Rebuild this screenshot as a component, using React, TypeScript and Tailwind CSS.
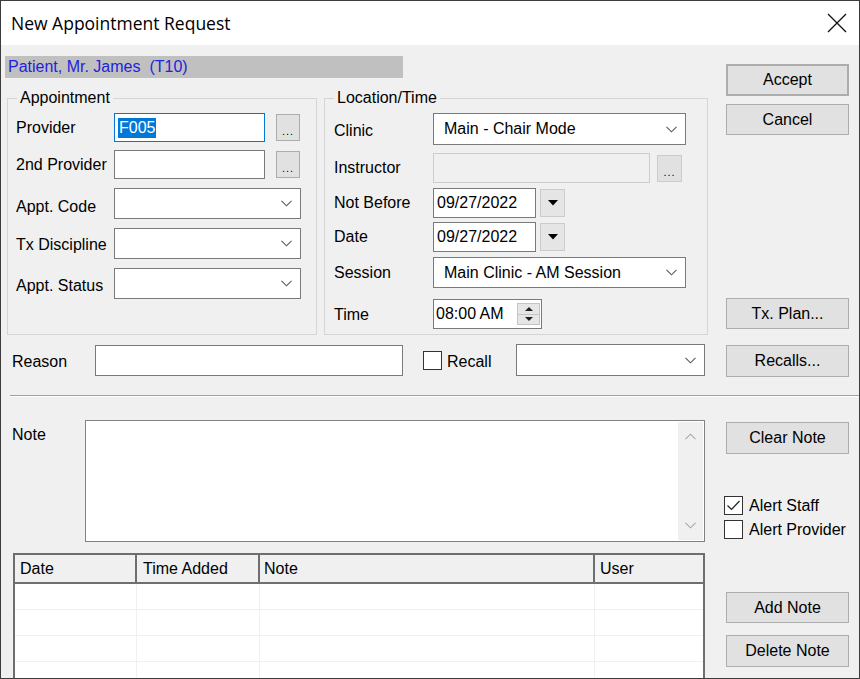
import React from 'react';

const Chevron = () => (
  <svg width="11" height="7" viewBox="0 0 11 7" fill="none" stroke="#5a5a5a" strokeWidth="1.1">
    <path d="M0.5 0.8 L5.5 5.8 L10.5 0.8" />
  </svg>
);

const Btn: React.FC<{ className?: string; children?: React.ReactNode }> = ({ className = '', children }) => (
  <div className={`flex items-center justify-center bg-[#e1e1e1] border border-[#adadad] ${className}`}>{children}</div>
);

const Dots: React.FC<{ className?: string }> = ({ className = '' }) => (
  <div className={`flex items-end justify-center bg-[#e1e1e1] border border-[#adadad] pb-[3px] text-[11px] leading-[11px] tracking-[1px] ${className}`}>...</div>
);

const Combo: React.FC<{ className?: string; value?: string }> = ({ className = '', value }) => (
  <div className={`flex items-center justify-between bg-white border border-[#7a7a7a] pl-[10px] pr-[8px] ${className}`}>
    <span>{value}</span>
    <Chevron />
  </div>
);

const DropBtn = () => (
  <div className="ml-[4px] flex h-[28px] w-[25px] items-center justify-center border border-[#cccccc] bg-[#e5e5e5]">
    <svg width="10" height="6" viewBox="0 0 10 6"><path d="M0 0 H10 L5 5.5 Z" fill="#000" /></svg>
  </div>
);

const Check: React.FC<{ checked?: boolean }> = ({ checked }) => (
  <div className="flex h-[19px] w-[19px] shrink-0 items-center justify-center border border-[#333] bg-white">
    {checked && (
      <svg width="15" height="13" viewBox="0 0 15 13" fill="none" stroke="#222" strokeWidth="1.2">
        <path d="M1.5 6.5 L5.5 10.5 L13.5 2" />
      </svg>
    )}
  </div>
);

const GroupBox: React.FC<{ title: string; className?: string; children?: React.ReactNode }> = ({ title, className = '', children }) => (
  <div className={`relative border border-[#d5d5d5] pt-[14px] ${className}`}>
    <span className="absolute -top-[10px] left-[9px] bg-[#f0f0f0] px-[3px] leading-[18px]">{title}</span>
    {children}
  </div>
);

const Row: React.FC<{ label: string; labelW: string; labelPad?: string; className?: string; children?: React.ReactNode }> = ({ label, labelW, labelPad = '', className = '', children }) => (
  <div className={`flex items-center ${className}`}>
    <span className={`${labelW} ${labelPad} shrink-0`}>{label}</span>
    {children}
  </div>
);

export default function App() {
  return (
    <div className="h-[679px] w-[860px] overflow-hidden border border-[#3c3c3c] bg-[#f0f0f0] text-[16px] text-black" style={{ fontFamily: '"Liberation Sans", Arial, sans-serif' }}>
      {/* title bar */}
      <div className="flex h-[44px] items-center justify-between bg-white pl-[10px] pr-[12px]">
        <span className="text-[17.5px]" style={{ fontFamily: '"Open Sans", "Noto Sans", sans-serif' }}>New Appointment Request</span>
        <svg width="20" height="20" viewBox="0 0 20 20" stroke="#111" strokeWidth="1.3">
          <path d="M1 1 L19 19 M19 1 L1 19" />
        </svg>
      </div>

      {/* top section */}
      <div className="flex">
        <div className="w-[718px] shrink-0">
          <div className="ml-[4px] mt-[11px] h-[22px] w-[398px] whitespace-pre bg-[#c0c0c0] pl-[3px] leading-[22px] text-[#2222dd]">Patient, Mr. James  (T10)</div>

          <div className="ml-[6px] mt-[20px] flex gap-[7px]">
            <GroupBox title="Appointment" className="h-[237px] w-[310px] pl-[8px]">
              <Row label="Provider" labelW="w-[98px]">
                <div className="flex h-[29px] w-[151px] items-center border border-[#0078d7] bg-white pl-[3px]">
                  <span className="bg-[#0078d7] px-[1px] leading-[20px] text-white">F005</span>
                </div>
                <Dots className="ml-[11px] h-[27px] w-[24px]" />
              </Row>
              <Row label="2nd Provider" labelW="w-[98px]" className="mt-[8px]">
                <div className="h-[29px] w-[151px] border border-[#7a7a7a] bg-white" />
                <Dots className="ml-[11px] h-[27px] w-[24px]" />
              </Row>
              <Row label="Appt. Code" labelW="w-[98px]" labelPad="pt-[7px]" className="mt-[9px]">
                <Combo className="h-[31px] w-[187px]" />
              </Row>
              <Row label="Tx Discipline" labelW="w-[98px]" labelPad="pt-[2px]" className="mt-[9px]">
                <Combo className="h-[31px] w-[187px]" />
              </Row>
              <Row label="Appt. Status" labelW="w-[98px]" labelPad="pt-[4px]" className="mt-[9px]">
                <Combo className="h-[31px] w-[187px]" />
              </Row>
            </GroupBox>

            <GroupBox title="Location/Time" className="h-[237px] w-[384px] pl-[9px]">
              <Row label="Clinic" labelW="w-[99px]" labelPad="pt-[3px]">
                <Combo className="h-[32px] w-[253px]" value="Main - Chair Mode" />
              </Row>
              <Row label="Instructor" labelW="w-[99px]" className="mt-[8px]">
                <div className="h-[30px] w-[217px] border border-[#cccccc] bg-[#f0f0f0]" />
                <Dots className="ml-[7px] h-[27px] w-[25px] border-[#cccccc]" />
              </Row>
              <Row label="Not Before" labelW="w-[99px]" className="mt-[5px]">
                <div className="flex h-[30px] w-[103px] items-center border border-[#7a7a7a] bg-white pl-[3px]">09/27/2022</div>
                <DropBtn />
              </Row>
              <Row label="Date" labelW="w-[99px]" className="mt-[4px]">
                <div className="flex h-[30px] w-[103px] items-center border border-[#7a7a7a] bg-white pl-[3px]">09/27/2022</div>
                <DropBtn />
              </Row>
              <Row label="Session" labelW="w-[99px]" className="mt-[5px]">
                <Combo className="h-[31px] w-[253px]" value="Main Clinic - AM Session" />
              </Row>
              <Row label="Time" labelW="w-[99px]" labelPad="pt-[2px]" className="mt-[11px]">
                <div className="flex h-[30px] w-[109px] items-center border border-[#7a7a7a] bg-white pl-[2px] pr-[1px]">
                  <span className="flex-1">08:00 AM</span>
                  <div className="flex h-[22px] w-[23px] flex-col border border-[#c4c4c4] bg-[#e6e6e6]">
                    <div className="flex flex-1 items-center justify-center border-b border-[#c4c4c4]">
                      <svg width="8" height="4" viewBox="0 0 8 4"><path d="M0 4 H8 L4 0 Z" fill="#222" /></svg>
                    </div>
                    <div className="flex flex-1 items-center justify-center">
                      <svg width="8" height="4" viewBox="0 0 8 4"><path d="M0 0 H8 L4 4 Z" fill="#222" /></svg>
                    </div>
                  </div>
                </div>
              </Row>
            </GroupBox>
          </div>

          <div className="mt-[9px] flex h-[32px] items-center">
            <span className="ml-[11px] w-[83px] shrink-0 pt-[3px]">Reason</span>
            <div className="h-[31px] w-[308px] border border-[#7a7a7a] bg-white" />
            <div className="ml-[20px] flex w-[93px] items-center gap-[5px]">
              <Check />
              <span className="pt-[3px]">Recall</span>
            </div>
            <Combo className="h-[32px] w-[189px]" />
          </div>
        </div>

        <div className="ml-[7px] flex w-[123px] flex-col">
          <Btn className="mt-[19px] h-[32px] border-2 border-[#0078d7]">Accept</Btn>
          <Btn className="mt-[8px] h-[31px]">Cancel</Btn>
          <Btn className="mt-[163px] h-[31px]">Tx. Plan...</Btn>
          <Btn className="mt-[16px] h-[32px]">Recalls...</Btn>
        </div>
      </div>

      {/* separator */}
      <div className="ml-[9px] mt-[18px] h-[2px] border-t border-b border-t-[#a0a0a0] border-b-white" />

      {/* bottom section */}
      <div className="flex">
        <div className="w-[718px] shrink-0">
          <div className="mt-[23px] flex">
            <span className="ml-[11px] w-[73px] shrink-0 pt-[3px]">Note</span>
            <div className="flex h-[122px] w-[620px] border border-[#828282] bg-white">
              <div className="flex-1" />
              <div className="my-[1px] mr-[1px] flex w-[25px] flex-col items-center justify-between bg-[#f0f0f0] py-[11px]">
                <svg width="11" height="7" viewBox="0 0 11 7" fill="none" stroke="#a6a6a6" strokeWidth="1.1"><path d="M0.5 6.2 L5.5 1.2 L10.5 6.2" /></svg>
                <svg width="11" height="7" viewBox="0 0 11 7" fill="none" stroke="#a6a6a6" strokeWidth="1.1"><path d="M0.5 0.8 L5.5 5.8 L10.5 0.8" /></svg>
              </div>
            </div>
          </div>

          <div className="ml-[12px] mt-[11px] h-[140px] w-[692px] border-2 border-[#6e6e6e] bg-white">
            <div className="flex h-[29px]">
              <div className="w-[122px] border-b-2 border-r-2 border-[#6f6f6f] bg-[#f0f0f0] pl-[5px] leading-[27px]">Date</div>
              <div className="w-[123px] border-b-2 border-r-2 border-[#6f6f6f] bg-[#f0f0f0] pl-[6px] leading-[27px]">Time Added</div>
              <div className="w-[335px] border-b-2 border-r-2 border-[#6f6f6f] bg-[#f0f0f0] pl-[4px] leading-[27px]">Note</div>
              <div className="flex-1 border-b-2 border-[#6f6f6f] bg-[#f0f0f0] pl-[5px] leading-[27px]">User</div>
            </div>
            {[0, 1, 2, 3].map((i) => (
              <div key={i} className="flex h-[26px] border-b border-[#f0f0f0]">
                <div className="w-[122px] border-r border-[#f0f0f0]" />
                <div className="w-[123px] border-r border-[#f0f0f0]" />
                <div className="w-[335px] border-r border-[#f0f0f0]" />
                <div className="flex-1" />
              </div>
            ))}
          </div>
        </div>

        <div className="ml-[7px] flex w-[123px] flex-col">
          <Btn className="mt-[25px] h-[32px]">Clear Note</Btn>
          <div className="-ml-[2px] mt-[42px] flex h-[19px] items-center gap-[6px]">
            <Check checked />
            <span>Alert Staff</span>
          </div>
          <div className="-ml-[2px] mt-[5px] flex h-[19px] items-center gap-[6px]">
            <Check />
            <span>Alert Provider</span>
          </div>
          <Btn className="mt-[53px] h-[31px]">Add Note</Btn>
          <Btn className="mt-[12px] h-[32px]">Delete Note</Btn>
        </div>
      </div>
    </div>
  );
}
